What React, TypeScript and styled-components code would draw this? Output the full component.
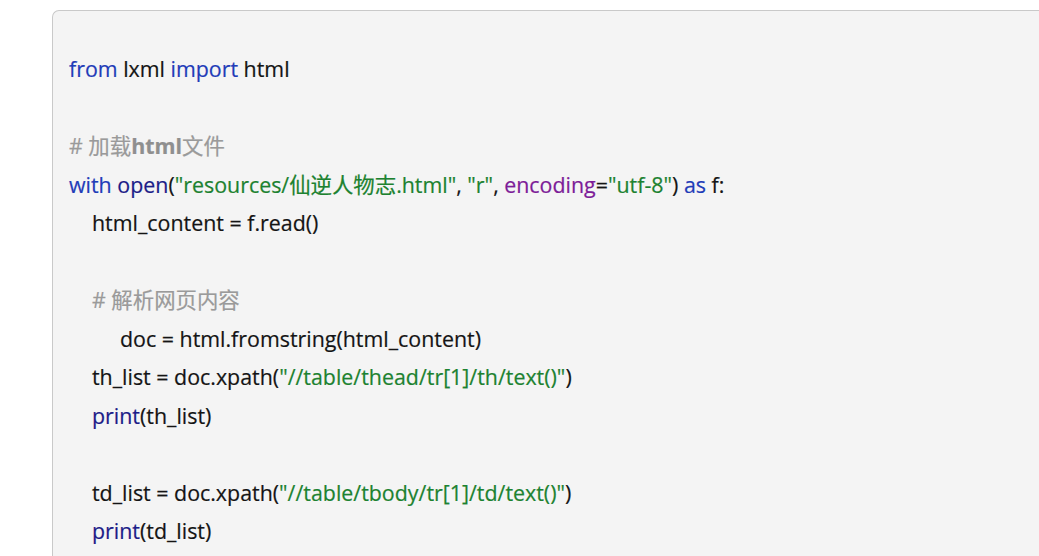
import React from "react";
import styled, { createGlobalStyle } from "styled-components";

const Global = createGlobalStyle`
  html, body { margin: 0; padding: 0; background: #ffffff; overflow: hidden; }
`;

const Page = styled.div`
  padding: 10px 0 0 52px;
`;

const CodeBlock = styled.pre`
  margin: 0;
  width: 987px;
  height: 546px;
  box-sizing: border-box;
  overflow: hidden;
  background: #f4f4f4;
  border: 1px solid #c9c9c9;
  border-right: none;
  border-bottom: none;
  border-radius: 7px 0 0 0;
  padding: 39px 16px 0 16px;
  font-family: "Open Sans", "Noto Sans CJK SC", sans-serif;
  font-size: 21.4px;
  line-height: 38.5px;
  color: #141414;
  white-space: pre;
  -webkit-text-stroke: 0.2px currentColor;
`;

const Line = styled.div<{ $indent?: number }>`
  height: 38.5px;
  padding-left: ${(p) => p.$indent ?? 0}px;
`;

type Kind = "kw" | "fn" | "str" | "arg" | "cm" | "cmb";

const Tok = styled.span<{ $k: Kind }>`
  color: ${(p) =>
    ({
      kw: "#1f3cb8",
      fn: "#1c1c88",
      str: "#1c8230",
      arg: "#7d1c98",
      cm: "#9a9a9a",
      cmb: "#8f8f8f",
    })[p.$k]};
  font-weight: ${(p) => (p.$k === "cmb" ? 700 : 400)};
`;

export default function App() {
  return (
    <>
      <Global />
      <Page>
        <CodeBlock>
          <Line>
            <Tok $k="kw">from</Tok> lxml <Tok $k="kw">import</Tok> html
          </Line>
          <Line />
          <Line>
            <Tok $k="cm"># 加载</Tok>
            <Tok $k="cmb">html</Tok>
            <Tok $k="cm">文件</Tok>
          </Line>
          <Line>
            <Tok $k="kw">with</Tok> <Tok $k="fn">open</Tok>(
            <Tok $k="str">"resources/仙逆人物志.html"</Tok>, <Tok $k="str">"r"</Tok>,{" "}
            <Tok $k="arg">encoding</Tok>=<Tok $k="str">"utf-8"</Tok>) <Tok $k="kw">as</Tok> f:
          </Line>
          <Line $indent={23}>html_content = f.read()</Line>
          <Line />
          <Line $indent={23}>
            <Tok $k="cm"># 解析网页内容</Tok>
          </Line>
          <Line $indent={51}>doc = html.fromstring(html_content)</Line>
          <Line $indent={23}>
            th_list = doc.xpath(<Tok $k="str">"//table/thead/tr[1]/th/text()"</Tok>)
          </Line>
          <Line $indent={23}>
            <Tok $k="fn">print</Tok>(th_list)
          </Line>
          <Line />
          <Line $indent={23}>
            td_list = doc.xpath(<Tok $k="str">"//table/tbody/tr[1]/td/text()"</Tok>)
          </Line>
          <Line $indent={23}>
            <Tok $k="fn">print</Tok>(td_list)
          </Line>
        </CodeBlock>
      </Page>
    </>
  );
}
